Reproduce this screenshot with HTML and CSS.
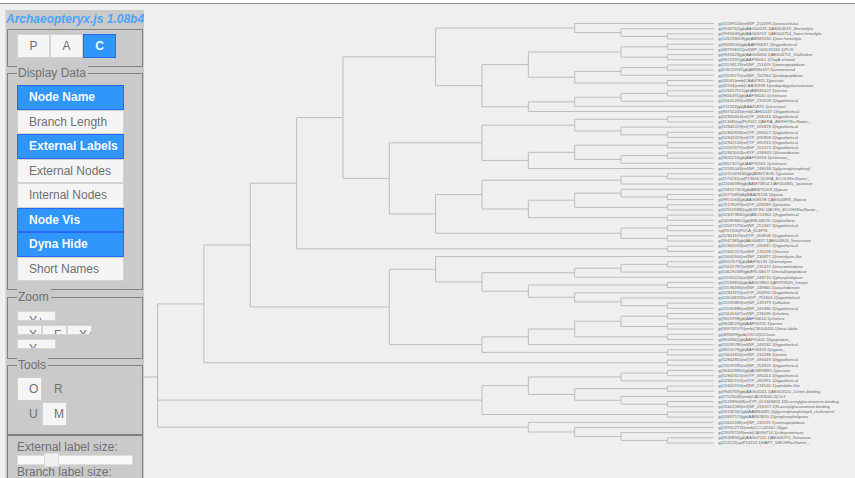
FILE: index.html
```html
<!DOCTYPE html>
<html lang="en">
<head>
<meta charset="utf-8">
<title>Archaeopteryx.js</title>
<link rel="stylesheet" href="styles.css">
</head>
<body>
<main class="viewer">
  <svg class="tree" id="tree" width="855" height="478" viewBox="0 0 855 478"></svg>
  <aside class="panel">
    <h1 class="title">Archaeopteryx.js 1.08b4</h1>
    <section class="box box-type">
      <div class="type-row">
        <span class="btn type">P</span><span class="btn type">A</span><span class="btn type on">C</span>
      </div>
    </section>
    <section class="box box-display">
      <h2 class="legend">Display Data</h2>
      <div class="list">
        <span class="btn on">Node Name</span>
        <span class="btn">Branch Length</span>
        <span class="btn on">External Labels</span>
        <span class="btn">External Nodes</span>
        <span class="btn">Internal Nodes</span>
        <span class="btn on">Node Vis</span>
        <span class="btn on">Dyna Hide</span>
        <span class="btn">Short Names</span>
      </div>
    </section>
    <section class="box box-zoom">
      <h2 class="legend">Zoom</h2>
      <div class="zoom-row"><span class="clip wide">Y+</span></div>
      <div class="zoom-row"><span class="clip">X-</span><span class="clip">F</span><span class="clip">X+</span></div>
      <div class="zoom-row"><span class="clip wide">Y-</span></div>
    </section>
    <section class="box box-tools">
      <h2 class="legend">Tools</h2>
      <div class="tools">
        <span class="tool lit">O</span><span class="tool">R</span>
        <span class="tool">U</span><span class="tool lit">M</span>
      </div>
    </section>
    <section class="box box-size">
      <div class="label">External label size:</div>
      <div class="slider"><i class="knob"></i></div>
      <div class="label">Branch label size:</div>
      <div class="slider low"><i class="knob"></i></div>
    </section>
  </aside>
</main>
<script src="tree.js"></script>
</body>
</html>
```
FILE: styles.css
```css
* { box-sizing: border-box; }
html, body { margin: 0; height: 478px; overflow: hidden; }
body { background: #fff; padding-top: 3px; font-family: "Liberation Sans", Arial, sans-serif; font-size: 12px; color: #707070; }
.viewer { height: 475px; border-top: 1px solid #8c8c8c; background: #efefef; padding: 6px 0 0 5px; overflow: hidden; }
.tree { position: absolute; left: 0; top: 0; }
.tree path { fill: none; stroke: #bdbdbd; stroke-width: 1; }
.tree text { font-size: 4px; fill: #686868; }
.panel { position: relative; width: 139px; height: 480px; padding: 0 1px 0 2px; border-left: 1px solid #dadada; background: rgba(199, 199, 199, 0.93); }
.title { margin: 0 0 0 -2px; height: 19px; line-height: 18px; font-size: 12px; font-style: italic; font-weight: bold; color: #4ba3fa; white-space: nowrap; }
.box { position: relative; width: 136px; margin-left: -1px; border: 1px solid #808080; padding-left: 9px; }
.box-type { height: 38px; padding-top: 4px; }
.box-display { height: 217px; margin-top: 6px; padding-top: 11px; }
.box-zoom { height: 62px; margin-top: 7px; padding-top: 13px; }
.box-tools { height: 70px; margin-top: 6px; padding-top: 11px; }
.box-size { height: 60px; padding-top: 4px; }
.legend { position: absolute; left: 9px; top: -9px; margin: 0; padding: 0 2px 0 1px; font-size: 12px; line-height: 17px; font-weight: normal; background: #c9c9c9; white-space: nowrap; }
.type-row { display: flex; }
.list { width: 107px; }
.btn { display: block; height: 24.55px; line-height: 22px; padding-left: 11px; border: 1px solid #d3d3d3; background: #f5f5f5; white-space: nowrap; }
.btn.on { background: #3096fc; border-color: #2b67f5; color: #f5faff; font-weight: bold; }
.btn.type { width: 33px; height: 24px; padding: 0; text-align: center; }
.zoom-row { display: flex; height: 14px; }
.clip { width: 25px; height: 10px; overflow: hidden; line-height: 19px; padding-left: 11px; border: 1px solid #d3d3d3; background: #f5f5f5; white-space: nowrap; }
.clip.wide { width: 39px; }
.tools { display: grid; grid-template-columns: 25px 25px; grid-auto-rows: 25px; }
.tool { border: 1px solid #cecece; height: 24px; line-height: 22px; padding-left: 11px; }
.tool.lit { background: #f5f5f5; }
.label { height: 15px; line-height: 15px; font-size: 12px; white-space: nowrap; }
.slider { width: 116px; height: 10px; background: #fafafa; border: 1px solid #ddd; }
.knob { position: relative; display: block; width: 15px; height: 14px; margin-left: 26px; top: -3px; background: #f0f0f0; border: 1px solid #ddd; }
.low .knob { margin-left: 12px; }
```
FILE: tree.js
```js
// Each row: tip label; right edge of the label in thirds of a pixel from the label column.
const labels = `gi|15599103|ref|NP_252099.1|extracellular;295
gi|9946762|gb|AAG04233.1|AE004519_4hemolytic;341
gi|9949449|gb|AAG06707.1|AE004754_3non-hemolytic;366
gi|126218058|gb|ABN81562.1|non-hemolytic;306
gi|9658160|gb|AAF96637.1|hypothetical;291
gi|487958615|ref|WP_002032169.1|PI-IV;281
gi|9949423|gb|AAG06684.1|AE004751_10alkaline;337
gi|9657337|gb|AAF96061.1|TagA-related;284
gi|15598123|ref|NP_251629.1|aminopeptidase;315
gi|126220931|gb|ABN84437.1|ammonorod;285
gi|15599270|ref|NP_252964.1|endopeptidase;309
gi|42041|emb|CAA47821.1|pectate;251
gi|42334|emb|CAA35998.1|endopolygalacturonase;340
gi|126217921|gb|ABN81427.1|serine;262
gi|9656491|gb|AAF96100.1|chitinase;260
gi|15641293|ref|NP_230928.1|hypothetical;294
gi|151324|gb|AAA25873.1|structural;257
gi|83750243|emb|CAH11437.1|hypothetical;298
gi|52840444|ref|YP_094243.1|hypothetical;294
gi|113485|sp|P09167.2|AERA_AERHYRecName:_;333
gi|52842019|ref|YP_095818.1|hypothetical;294
gi|52842828|ref|YP_096627.1|hypothetical;294
gi|52842059|ref|YP_095858.1|hypothetical;294
gi|52842134|ref|YP_095933.1|hypothetical;294
gi|15597679|ref|NP_251473.1|hypothetical;294
gi|52843044|ref|YP_096843.1|thioredoxine;298
gi|9655216|gb|AAF93934.1|chitinase_;269
gi|9657407|gb|AAF95941.1|chitinase;260
gi|15595044|ref|NP_249038.1|glycerophosphoryl;330
gi|1015443340|gb|AMV13035.1|putative;282
gi|1176231|sp|P13656.2|CHIA_ECOLIRecName:_;330
gi|21666989|gb|AAM73854.1|AF454865_1putative;338
gi|158517303|gb|ABW75203.1|lipase;263
gi|2077089|dbj|BAA23128.1|lipase;249
gi|9951063|gb|AAG08198.1|AE004894_4lipase;320
gi|29176293|ref|YP_028189.1|putative;271
gi|325529880|sp|E3PJ90.1|ACFD_ECOH1RecName:_;356
gi|126373840|gb|ABO13862.1|hypothetical;296
gi|542898601|gb|ERL68190.1|alpha/beta;285
gi|15597573|ref|NP_251367.1|hypothetical;294
sp|P07206|PULA_KLEPN;202
gi|52841109|ref|YP_094908.1|hypothetical;294
gi|9947389|gb|AAG04837.1|AE004844_9reactivate;333
gi|52842036|ref|YP_095835.1|hypothetical;294
gi|15601557|ref|NP_233198.1|leucine;267
gi|15640964|ref|NP_230877.1|hemolysin-like;306
gi|9657673|gb|AAF96131.1|hemolysin;276
gi|15641787|ref|NP_231419.1|neuraminidase;309
gi|546290388|gb|ERL68477.1|metallopeptidase;320
gi|15595224|ref|NP_248716.1|phospholipase;308
gi|12584854|gb|AAG59863.1|AF299049_1major;324
gi|15596366|ref|NP_249860.1|arachidonate;299
gi|52841191|ref|YP_094990.1|hypothetical;294
gi|116048593|ref|YP_792606.1|hypothetical;299
gi|15595883|ref|NP_249379.1|alkaline;270
gi|15595886|ref|NP_249380.1|hypothetical;294
gi|15641467|ref|NP_231099.1|cholera;267
gi|9655998|gb|AAF94614.1|cholera;253
gi|9658229|gb|AAF96701.1|serine;247
gi|309705579|emb|CBJ04426.1|heat-labile;293
gi|499699|pdb|1XOZ|DChain;225
gi|9656962|gb|AAF95442.1|lipoprotein_;272
gi|15595789|ref|NP_249262.1|hypothetical;294
gi|9655079|gb|AAF94359.1|trypsin_;256
gi|15641654|ref|NP_231286.1|serine;261
gi|52842850|ref|YP_096649.1|hypothetical;294
gi|15599335|ref|NP_252829.1|hypothetical;294
gi|306028960|gb|ADM98885.1|pectate;271
gi|52841615|ref|YP_095414.1|hypothetical;294
gi|52842192|ref|YP_095991.1|hypothetical;294
gi|15600910|ref|NP_232540.1|spindolin-like;300
gi|9946769|gb|AAG04241.1|AE004520_2chitin-binding;361
gi|27529040|emb|CAC83040.2|ChiY;258
gi|152989068|ref|YP_001346803.1|N-acetylglucosamine-binding;417
gi|15601586|ref|NP_233197.1|N-acetylglucosamine-binding;390
gi|59230561|gb|AAW84485.1|glycerophospholipid_cholesterol;403
gi|24637570|gb|AAN63820.1|lysophospholipase;325
gi|15601586|ref|NP_233199.1|aminopeptidase;315
gi|299502731|emb|CCC42062.1|lype;263
gi|239787169|emb|CAX80714.1|rubrproteinase;311
gi|9949890|gb|AAG07111.1|AE004791_9elastase;333
gi|122223|sp|P24153.1|HAPT_VIBCHRecName:_;328`.split("\n").map(s => s.split(";"));

// Topology: each nested array is an internal node, each number a leaf.
const topology =
[[[[[[[1,[2,[3,4]]],
      [[[[5,6],[7,8]],[[[9,10],11],[12,13]]],
       [[[[14,15],16],17],18]]],
     [[[[19,20],[21,[22,23]]],
       [[[24,25],[[26,27],28]],29]],
      [[[[30,31],32],[[[33,[34,35]],[36,37]],[38,39]]],
       [[40,41],[42,43]]]]],
    [44,45]],
   [[46,[[[[47,48],49],50],[[51,52],[53,[54,[55,56]]]]]],
    [[[[[57,58],[59,60]],[61,62]],63],[64,65]]]],
  [66,67]],
 [[[[68,69],70],[[71,72],[73,[74,75]]]],[76,77]],
 [78,[79,[80,[81,82]]]]];

const NS = "http://www.w3.org/2000/svg";
const svg = document.getElementById("tree");
const TIP = 713.8, STEP = 46.35, TOP = 23.5, ROW = 5.179;
const colX = h => h === 0 ? TIP : 667.4 - (h - 1) * STEP;

function line(d) {
  const p = document.createElementNS(NS, "path");
  p.setAttribute("d", d);
  svg.appendChild(p);
}
function place(n) {
  if (typeof n === "number") return { h: 0, y: TOP + (n - 1) * ROW };
  const kids = n.map(place);
  const h = 1 + Math.max(...kids.map(k => k.h));
  const y = kids.reduce((s, k) => s + k.y, 0) / kids.length;
  kids.forEach(k => line(`M${colX(h)} ${y}V${k.y}H${colX(k.h)}`));
  return { h, y };
}
const root = place(topology);
line(`M111 ${root.y}H${colX(root.h)}`);

labels.forEach(([name, end], i) => {
  const t = document.createElementNS(NS, "text");
  t.setAttribute("x", 718.3);
  t.setAttribute("y", TOP + i * ROW + 1.3);
  t.setAttribute("textLength", (end - 55) / 3);
  t.setAttribute("lengthAdjust", "spacingAndGlyphs");
  t.textContent = name;
  svg.appendChild(t);
});
```
